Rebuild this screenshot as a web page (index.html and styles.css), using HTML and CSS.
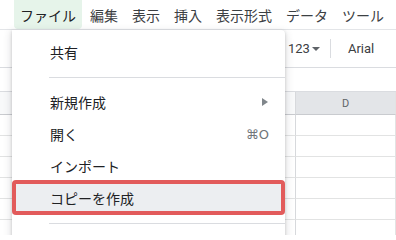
FILE: index.html
```html
<!DOCTYPE html>
<html lang="ja">
<head>
<meta charset="utf-8">
<title>Sheets menu</title>
<link rel="stylesheet" href="styles.css">
</head>
<body>
<div class="app">
  <nav class="menubar">
    <span class="mb-item active">ファイル</span>
    <span class="mb-item">編集</span>
    <span class="mb-item">表示</span>
    <span class="mb-item">挿入</span>
    <span class="mb-item">表示形式</span>
    <span class="mb-item">データ</span>
    <span class="mb-item">ツール</span>
  </nav>
  <div class="toolbar">
    <span class="tb-num">123<i class="caret"></i></span>
    <span class="tb-div"></span>
    <span class="tb-font">Arial</span>
  </div>
  <div class="formula"></div>
  <div class="grid">
    <div class="row head">
      <div class="c rh"></div><div class="c ca"></div><div class="c cb"></div><div class="c cc"></div><div class="c cd sel">D</div>
    </div>
    <div class="row"><div class="c rh"></div><div class="c ca"></div><div class="c cb"></div><div class="c cc"></div><div class="c cd"></div></div>
    <div class="row"><div class="c rh"></div><div class="c ca"></div><div class="c cb"></div><div class="c cc"></div><div class="c cd"></div></div>
    <div class="row"><div class="c rh"></div><div class="c ca"></div><div class="c cb"></div><div class="c cc"></div><div class="c cd"></div></div>
    <div class="row"><div class="c rh"></div><div class="c ca"></div><div class="c cb"></div><div class="c cc"></div><div class="c cd"></div></div>
    <div class="row"><div class="c rh"></div><div class="c ca"></div><div class="c cb"></div><div class="c cc"></div><div class="c cd"></div></div>
    <div class="row"><div class="c rh"></div><div class="c ca"></div><div class="c cb"></div><div class="c cc"></div><div class="c cd"></div></div>
  </div>

  <div class="menu">
    <div class="mi">共有</div>
    <div class="sep"></div>
    <div class="mi"><span>新規作成</span><i class="arrow"></i></div>
    <div class="mi"><span>開く</span><span class="kbd">⌘O</span></div>
    <div class="mi">インポート</div>
    <div class="mi hl">コピーを作成</div>
    <div class="sep"></div>
  </div>
</div>
</body>
</html>
```

FILE: styles.css
```css
html, body {
  margin: 0;
  padding: 0;
  background: #ffffff;
}
body {
  width: 396px;
  height: 235px;
  overflow: hidden;
  font-family: "Roboto", "Noto Sans CJK JP", "DejaVu Sans", sans-serif;
  color: #202124;
}
.app {
  position: relative;
  width: 396px;
  height: 235px;
  overflow: hidden;
}

/* menubar */
.menubar {
  display: flex;
  gap: 2px;
  height: 29px;
  padding-left: 14px;
  border-bottom: 1px solid #e3e5e8;
  font-family: "Noto Sans CJK JP", sans-serif;
  font-size: 14px;
  color: #3c4043;
  white-space: nowrap;
}
.mb-item {
  display: flex;
  align-items: center;
  padding: 0 6px;
  height: 29px;
  line-height: 1;
}
.mb-item.active {
  background: #e6f4ea;
  border-radius: 0 0 4px 4px;
  color: #202124;
}

/* toolbar */
.toolbar {
  display: flex;
  align-items: center;
  height: 37px;
  padding-left: 288px;
  border-bottom: 1px solid #dadce0;
  font-size: 13px;
  color: #3c4043;
  white-space: nowrap;
}
.tb-num {
  display: flex;
  align-items: center;
}
.caret {
  display: inline-block;
  width: 0;
  height: 0;
  margin-left: 2px;
  margin-top: 1px;
  border-left: 4px solid transparent;
  border-right: 4px solid transparent;
  border-top: 4px solid #5f6368;
}
.tb-div {
  width: 1px;
  height: 19px;
  background: #dadce0;
  margin: 0 17px 0 10px;
}
.tb-font {
  color: #3c4043;
}

/* formula bar */
.formula {
  height: 23px;
  border-bottom: 1px solid #dadce0;
}

/* grid */
.row {
  display: flex;
  height: 21px;
}
.row.head {
  height: 23px;
  background: #f8f9fa;
}
.c {
  box-sizing: border-box;
  border-right: 1px solid #e2e3e3;
  border-bottom: 1px solid #e2e3e3;
  flex: none;
}
.rh { width: 46px; }
.ca { width: 100px; }
.cb { width: 100px; }
.cc { width: 50px; border-right-color: #d7d9dc; }
.cd { width: 100px; }
.head .c { border-bottom-color: #c9cbcf; }
.cd.sel {
  background: #e3e5e8;
  display: flex;
  align-items: center;
  justify-content: center;
  font-family: "Roboto", sans-serif;
  font-size: 11px;
  color: #5f6368;
}

/* dropdown menu (overlay) */
.menu {
  position: absolute;
  left: 12px;
  top: 30px;
  width: 273px;
  height: 230px;
  padding-top: 6px;
  box-sizing: border-box;
  background: #ffffff;
  border-radius: 0 4px 4px 4px;
  box-shadow: 0 1px 3px 0 rgba(60, 64, 67, 0.25), 0 3px 7px 2px rgba(60, 64, 67, 0.13);
  font-family: "Noto Sans CJK JP", sans-serif;
  font-size: 14px;
  color: #202124;
}
.mi {
  position: relative;
  display: flex;
  align-items: center;
  justify-content: space-between;
  height: 32px;
  padding: 0 16px 0 38px;
  line-height: 1;
  white-space: nowrap;
}
.sep {
  height: 1px;
  background: #dadce0;
  margin: 9px 0 8px 37px;
}
.arrow {
  display: inline-block;
  width: 0;
  height: 0;
  margin-right: 1px;
  border-top: 4px solid transparent;
  border-bottom: 4px solid transparent;
  border-left: 6px solid #80868b;
}
.kbd {
  font-family: "DejaVu Sans", "Roboto", sans-serif;
  font-size: 13px;
  color: #70757a;
}
.mi.hl {
  background: #eceef1;
}
.mi.hl::after {
  content: "";
  position: absolute;
  left: 0;
  right: 0;
  top: -2px;
  bottom: -1px;
  border: 4px solid #e25b5b;
  border-radius: 4px;
}
```
